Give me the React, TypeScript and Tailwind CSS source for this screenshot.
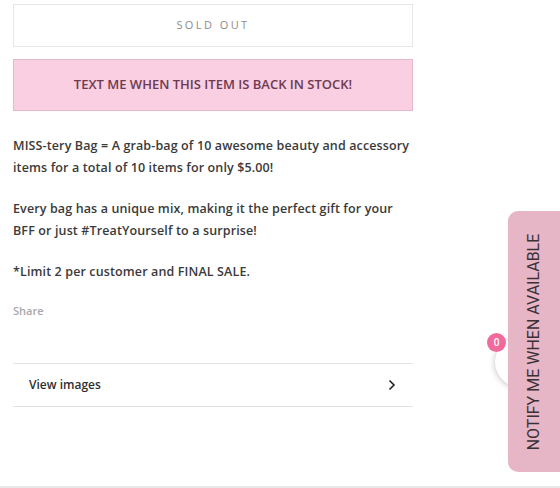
export default function App() {
  return (
    <div className="relative w-[560px] h-[488px] overflow-hidden bg-white font-['Open_Sans',sans-serif]">
      <div className="ml-[13px] w-[400px] pt-[4px]">
        <div className="h-[43px] border border-[#e6e6e6] flex items-center justify-center text-[11px] tracking-[0.22em] text-[#8c8c8c]">
          SOLD OUT
        </div>
        <div className="mt-[12px] h-[52px] bg-[#f9cfe1] border border-[#e4b9ca] flex items-center justify-center text-[13px] font-semibold text-[#6d3a51]">
          TEXT ME WHEN THIS ITEM IS BACK IN STOCK!
        </div>
        <div className="mt-[24px] text-[12.5px] font-semibold leading-[22px] text-[#3a3a3a] tracking-[0.01em]">
          <p>MISS-tery Bag = A grab-bag of 10 awesome beauty and accessory items for a total of 10 items for only $5.00!</p>
          <p className="mt-[19px]">Every bag has a unique mix, making it the perfect gift for your BFF or just #TreatYourself to a surprise!</p>
          <p className="mt-[19px]">*Limit 2 per customer and FINAL SALE.</p>
        </div>
        <div className="mt-[20px] text-[11px] font-semibold text-[#a8a8a8]">Share</div>
        <div className="mt-[43px] border-t border-b border-[#e3e3e3] h-[44px] flex items-center justify-between pl-[16px] pr-[17px]">
          <span className="text-[12px] font-semibold text-[#2f2f2f]">View images</span>
          <svg width="8" height="12" viewBox="0 0 8 12" fill="none">
            <path d="M1.5 1.5 L6 6 L1.5 10.5" stroke="#222" strokeWidth="1.6" />
          </svg>
        </div>
      </div>
      <div className="absolute left-0 right-0 bottom-0 h-[2px] bg-[#e8e8e8]" />
      <div className="absolute left-[495px] top-[337px] w-[50px] h-[50px] rounded-full bg-white shadow-[0_1px_6px_rgba(0,0,0,0.25)]" />
      <div className="absolute left-[487px] top-[333px] w-[19px] h-[19px] rounded-full bg-[#f06a9b] flex items-center justify-center text-[10px] text-white font-semibold">
        0
      </div>
      <div className="absolute left-[508px] top-[211px] w-[60px] h-[261px] rounded-l-[10px] bg-[#e6b5c6] flex items-center justify-center">
        <span className="-rotate-90 whitespace-nowrap text-[16px] text-[#3b3035] font-['Roboto',sans-serif] -translate-x-[4px]">
          NOTIFY ME WHEN AVAILABLE
        </span>
      </div>
    </div>
  );
}
